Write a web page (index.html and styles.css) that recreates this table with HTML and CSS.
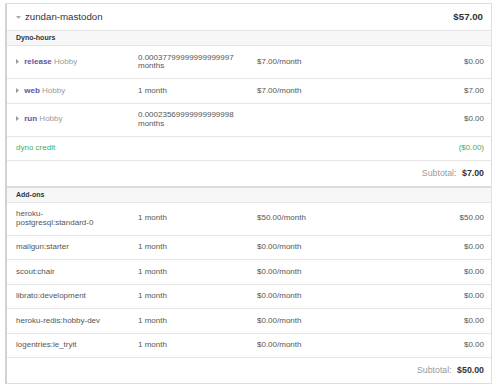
FILE: index.html
```html
<!DOCTYPE html>
<html lang="en">
  <head>
    <meta charset="UTF-8" />
    <meta name="viewport" content="width=device-width, initial-scale=1.0" />
    <title>Invoice - zundan-mastodon</title>
    <link rel="stylesheet" href="styles.css">
  </head>
  <body>
    <div class="invoice">
      <div class="invoice-head">
        <div class="app-name">
          <svg class="caret-down" width="5" height="3" viewBox="0 0 5 3"><polygon points="0,0 5,0 2.5,3" /></svg>
          zundan-mastodon
        </div>
        <div class="app-total">$57.00</div>
      </div>

      <table class="lines">
        <colgroup>
          <col class="col-name" />
          <col class="col-qty" />
          <col class="col-rate" />
          <col />
        </colgroup>
        <tbody>
          <tr class="section">
            <td colspan="4">Dyno-hours</td>
          </tr>
          <tr>
            <td class="name">
              <svg class="caret-right" width="3" height="5" viewBox="0 0 3 5"><polygon points="0,0 3,2.5 0,5" /></svg>
              <span class="dyno">release</span> <span class="tier">Hobby</span>
            </td>
            <td>0.00037799999999999997 months</td>
            <td>$7.00/month</td>
            <td class="price">$0.00</td>
          </tr>
          <tr>
            <td class="name">
              <svg class="caret-right" width="3" height="5" viewBox="0 0 3 5"><polygon points="0,0 3,2.5 0,5" /></svg>
              <span class="dyno">web</span> <span class="tier">Hobby</span>
            </td>
            <td>1 month</td>
            <td>$7.00/month</td>
            <td class="price">$7.00</td>
          </tr>
          <tr>
            <td class="name">
              <svg class="caret-right" width="3" height="5" viewBox="0 0 3 5"><polygon points="0,0 3,2.5 0,5" /></svg>
              <span class="dyno">run</span> <span class="tier">Hobby</span>
            </td>
            <td>0.00023569999999999998 months</td>
            <td></td>
            <td class="price">$0.00</td>
          </tr>
          <tr class="credit">
            <td colspan="3">dyno credit</td>
            <td class="price">($0.00)</td>
          </tr>
          <tr class="subtotal">
            <td colspan="4"><span class="sub-label">Subtotal:</span> <b>$7.00</b></td>
          </tr>

          <tr class="section">
            <td colspan="4">Add-ons</td>
          </tr>
          <tr>
            <td class="name">heroku-postgresql:standard-0</td>
            <td>1 month</td>
            <td>$50.00/month</td>
            <td class="price">$50.00</td>
          </tr>
          <tr>
            <td class="name">mailgun:starter</td>
            <td>1 month</td>
            <td>$0.00/month</td>
            <td class="price">$0.00</td>
          </tr>
          <tr>
            <td class="name">scout:chair</td>
            <td>1 month</td>
            <td>$0.00/month</td>
            <td class="price">$0.00</td>
          </tr>
          <tr>
            <td class="name">librato:development</td>
            <td>1 month</td>
            <td>$0.00/month</td>
            <td class="price">$0.00</td>
          </tr>
          <tr>
            <td class="name">heroku-redis:hobby-dev</td>
            <td>1 month</td>
            <td>$0.00/month</td>
            <td class="price">$0.00</td>
          </tr>
          <tr>
            <td class="name">logentries:le_tryit</td>
            <td>1 month</td>
            <td>$0.00/month</td>
            <td class="price">$0.00</td>
          </tr>
          <tr class="subtotal last">
            <td colspan="4"><span class="sub-label">Subtotal:</span> <b>$50.00</b></td>
          </tr>
        </tbody>
      </table>
    </div>
  </body>
</html>
```

FILE: styles.css
```css
:root {
  --text: #444;
  --muted: #9a9a9a;
  --line: #e6e6e6;
  --purple: #5d55a3;
  --green: #3fae5a;
}

html,
body {
  margin: 0;
  padding: 0;
  background: #fff;
  font-family: "Liberation Sans", Arial, sans-serif;
  color: var(--text);
}

.invoice {
  box-sizing: border-box;
  width: 487px;
  margin: 3px 0 0 5px;
  border: 1px solid #dedede;
  border-left: 2px solid #d2d2d2;
}

.invoice-head {
  display: flex;
  justify-content: space-between;
  align-items: center;
  padding: 7px 8px 7px 9px;
  font-size: 9.7px;
  line-height: 12px;
  color: #333;
  border-bottom: 1px solid var(--line);
}

.app-name {
  display: flex;
  align-items: center;
  gap: 4px;
}

.caret-down {
  fill: #aaa;
  margin-top: 1px;
}

.app-total {
  font-weight: bold;
}

.lines {
  width: 100%;
  border-collapse: collapse;
  table-layout: fixed;
  font-size: 8px;
  line-height: 8.5px;
}

.col-name {
  width: 122px;
}

.col-qty {
  width: 119px;
}

.col-rate {
  width: 119px;
}

.lines td {
  padding: 7.5px 7px 7.5px 9px;
  border-bottom: 1px solid var(--line);
  vertical-align: middle;
  color: #555;
}

.lines td.name {
  padding-right: 18px;
}

.lines .price {
  text-align: right;
}

.section td {
  background: #f7f7f7;
  font-size: 7px;
  line-height: 8px;
  font-weight: bold;
  color: #333;
  padding-top: 3px;
  padding-bottom: 3px;
}

.caret-right {
  fill: #999;
  margin-right: 3px;
  vertical-align: 0;
}

.dyno {
  font-weight: bold;
  color: var(--purple);
}

.tier {
  color: var(--muted);
}

.credit td {
  color: var(--green);
}

.subtotal td {
  text-align: right;
  font-size: 8.8px;
  line-height: 10.5px;
  padding-top: 7px;
  padding-bottom: 7px;
  color: #333;
  border-bottom: 2px solid #dcdcdc;
}

.subtotal.last td {
  border-bottom: none;
}

.sub-label {
  color: var(--muted);
  margin-right: 3px;
}
```
